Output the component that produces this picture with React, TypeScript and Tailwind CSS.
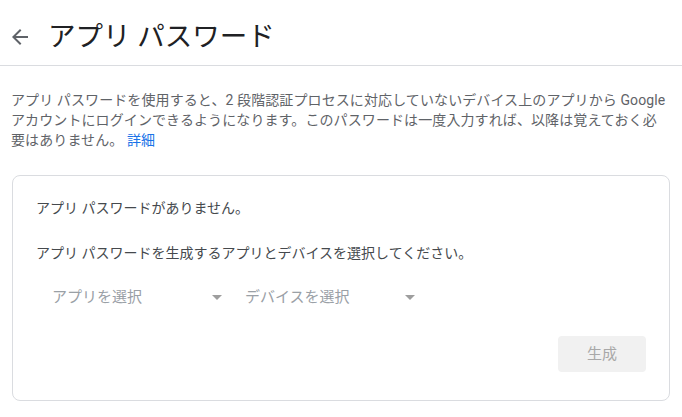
import React from "react";

function Caret() {
  return (
    <span className="block w-0 h-0 border-l-[5px] border-r-[5px] border-t-[5px] border-l-transparent border-r-transparent border-t-[#9e9e9e]" />
  );
}

function SelectBox({ label }: { label: string }) {
  return (
    <div className="w-[193px] h-[40px] flex items-center justify-between pl-[16px] pr-[7px]">
      <span className="text-[15px] leading-[20px] text-[#9aa0a6]">{label}</span>
      <Caret />
    </div>
  );
}

export default function App() {
  return (
    <div className="w-[682px] h-[417px] bg-white font-['Roboto','Noto_Sans_CJK_JP',sans-serif] overflow-hidden">
      <div className="h-[66px] pt-[8px] flex items-center border-b border-[#dadce0]">
        <div className="pl-[8px] flex items-center">
          <svg width="24" height="24" viewBox="0 0 24 24" className="text-[#5f6368]">
            <path
              fill="currentColor"
              d="M20 11H7.83l5.59-5.59L12 4l-8 8 8 8 1.41-1.41L7.83 13H20v-2z"
            />
          </svg>
        </div>
        <h1 className="ml-[16px] text-[27.5px] leading-[34px] text-[#202124] font-normal">
          アプリ パスワード
        </h1>
      </div>

      <div className="px-[11px]">
        <p className="mt-[24px] text-[14px] leading-[20px] text-[#5f6368] tracking-[0.1px]">
          アプリ パスワードを使用すると、2 段階認証プロセスに対応していないデバイス上のアプリから Google
          <br />
          アカウントにログインできるようになります。このパスワードは一度入力すれば、以降は覚えておく必
          <br />
          要はありません。 <span className="text-[#1a73e8]">詳細</span>
        </p>

        <div className="mt-[25px] ml-[1px] w-[658px] border border-[#dadce0] rounded-[8px] px-[23px] pt-[22px] pb-[28px]">
          <div className="text-[14px] leading-[20px] text-[#45494d]">
            アプリ パスワードがありません。
          </div>
          <div className="mt-[25px] text-[14px] leading-[20px] text-[#45494d]">
            アプリ パスワードを生成するアプリとデバイスを選択してください。
          </div>
          <div className="mt-[14px] flex">
            <SelectBox label="アプリを選択" />
            <SelectBox label="デバイスを選択" />
          </div>
          <div className="mt-[19px] flex justify-end">
            <div className="w-[88px] h-[36px] rounded-[4px] bg-[#f1f1f1] flex items-center justify-center text-[15px] text-[#a8a8a8]">
              生成
            </div>
          </div>
        </div>
      </div>
    </div>
  );
}
